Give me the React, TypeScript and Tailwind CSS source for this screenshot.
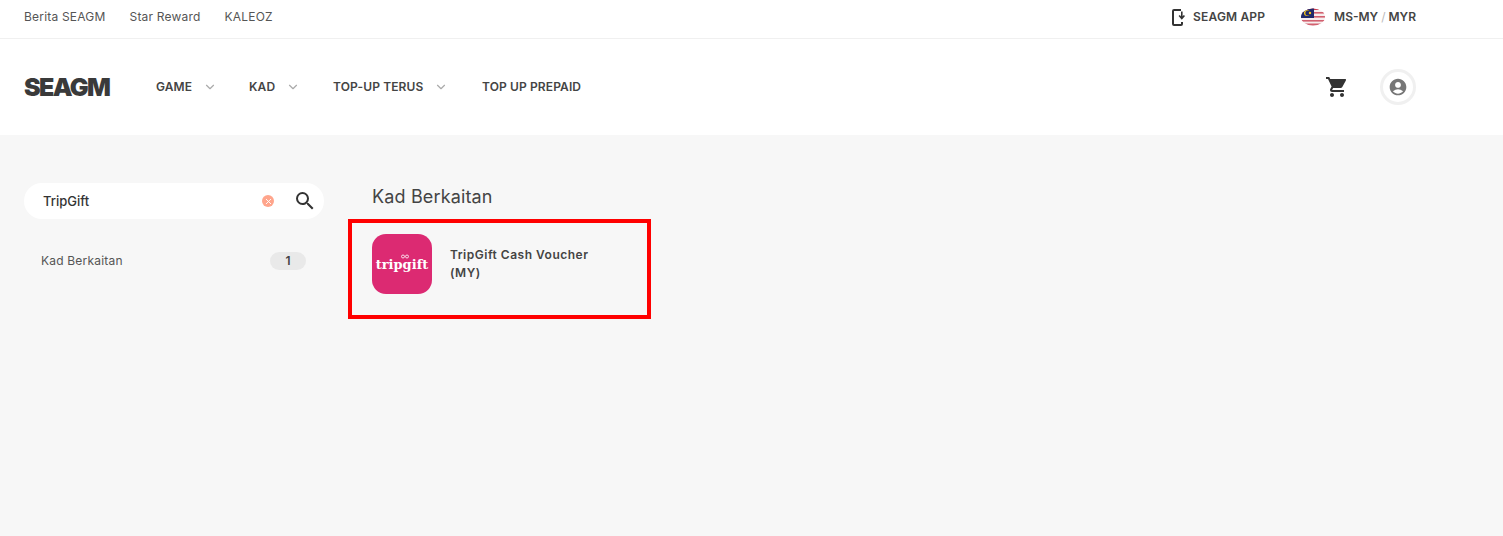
import React from "react";
import { ChevronDown, X } from "lucide-react";
import { MdAccountCircle, MdSearch, MdShoppingCart } from "react-icons/md";

const font = { fontFamily: "Inter, 'Noto Sans', sans-serif" };

const topLinks = ["Berita SEAGM", "Star Reward", "KALEOZ"];
const navItems = [
  { label: "GAME", width: "w-[93px]", arrow: true },
  { label: "KAD", width: "w-[84px]", arrow: true },
  { label: "TOP-UP TERUS", width: "w-[149px]", arrow: true },
  { label: "TOP UP PREPAID", width: "", arrow: false },
];

// Malaysia flag, clipped to an oval like the site does
const FlagIcon = () => (
  <svg width="24" height="18" viewBox="0 0 24 18" className="block">
    <defs>
      <clipPath id="flag">
        <ellipse cx="12" cy="9" rx="12" ry="8.6" />
      </clipPath>
    </defs>
    <g clipPath="url(#flag)">
      <rect width="24" height="18" fill="#f6eeee" />
      <rect y="0" width="24" height="2" fill="#c9384e" />
      <rect y="4" width="24" height="1.6" fill="#d2606f" />
      <rect y="8" width="24" height="1.6" fill="#d2606f" />
      <rect y="12" width="24" height="1.6" fill="#d2606f" />
      <rect y="15.5" width="24" height="2.5" fill="#d2606f" />
      <rect width="13" height="10" fill="#1f2a6b" />
      <circle cx="6" cy="5" r="3" fill="#f5c518" />
      <circle cx="7" cy="5" r="2.6" fill="#1f2a6b" />
      <circle cx="9" cy="5" r="1.2" fill="#f5c518" />
    </g>
  </svg>
);

const AppIcon = () => (
  <svg width="14" height="17" viewBox="0 0 14 17" fill="none" className="block">
    <path d="M9 1H2C1.4 1 1 1.4 1 2v13c0 .6.4 1 1 1h7c.6 0 1-.4 1-1v-2" stroke="#333" strokeWidth="2" />
    <path d="M9.8 2.5v6.5M7.2 6.5l2.6 3 2.6-3" stroke="#333" strokeWidth="1.6" />
  </svg>
);

export default function App() {
  return (
    <div className="min-h-[536px] bg-[#f7f7f7] text-[#444]" style={font}>
      <header className="bg-white">
        <div className="h-[39px] border-b border-[#f0f0f0] flex items-center justify-between pl-6 pr-[87px] pb-1">
          <div className="flex items-center gap-6 text-[12px] tracking-[0.2px] text-[#555]">
            {topLinks.map((link) => (
              <span key={link}>{link}</span>
            ))}
          </div>
          <div className="flex items-center text-[12px] font-semibold text-[#444]">
            <AppIcon />
            <span className="ml-[7px] tracking-[0.15px]">SEAGM APP</span>
            <span className="ml-9">
              <FlagIcon />
            </span>
            <span className="ml-[9px]">
              MS-MY <span className="text-[#bbb] font-normal">/</span> MYR
            </span>
          </div>
        </div>

        <div className="h-[96px] flex items-center justify-between pl-6 pr-[87px]">
          <div className="flex items-center">
            <span className="w-[132px] text-[25px] leading-none font-black tracking-[-1.6px] text-[#3a3a3a]">
              SEAGM
            </span>
            {navItems.map((item) => (
              <div key={item.label} className={`flex items-center ${item.width}`}>
                <span className="text-[12px] font-semibold tracking-[0.12px] text-[#444]">{item.label}</span>
                {item.arrow && <ChevronDown size={14} className="ml-[11px] text-[#aaa]" />}
              </div>
            ))}
          </div>
          <div className="flex items-center gap-[31px]">
            <MdShoppingCart size={24} className="text-[#333]" />
            <div className="w-9 h-9 rounded-full border-[3px] border-[#f0f0f0] flex items-center justify-center">
              <MdAccountCircle size={20} className="text-[#777]" />
            </div>
          </div>
        </div>
      </header>

      <main className="flex pl-6 pt-12">
        <aside className="w-[300px] shrink-0">
          <div className="h-9 rounded-full bg-white flex items-center pl-[19px] pr-[7px]">
            <span className="flex-1 pt-0.5 text-[13px] font-medium text-[#333]">TripGift</span>
            <span className="w-3 h-3 rounded-full bg-[#ffa58c] flex items-center justify-center mr-[19px]">
              <X size={9} strokeWidth={2.5} className="text-white" />
            </span>
            <MdSearch size={24} className="text-[#333]" />
          </div>
          <div className="mt-[33px] flex items-center justify-between pl-[17px] pr-[18px]">
            <span className="text-[12px] tracking-[0.2px] text-[#555]">Kad Berkaitan</span>
            <span className="w-9 h-[18px] rounded-full bg-[#e9e9e9] flex items-center justify-center text-[12px] font-semibold text-[#444]">
              1
            </span>
          </div>
        </aside>

        <section className="ml-6">
          <h2 className="h-9 pl-6 text-[18px] leading-[27px] font-normal tracking-[0.15px] text-[#444]">Kad Berkaitan</h2>
          <div className="w-[303px] h-[100px] border-4 border-[#f00] flex items-start pl-5 pt-[11px]">
            <div className="relative w-[60px] h-[60px] rounded-[14px] bg-[#dc2a72] flex items-center justify-center">
              <span className="pt-0.5 text-white text-[13px] font-bold" style={{ fontFamily: "'DejaVu Serif', serif" }}>
                tripgift
              </span>
              {/* little bow over the g */}
              <svg width="8" height="5" viewBox="0 0 8 5" fill="none" className="absolute left-[29px] top-[20px]">
                <circle cx="2" cy="2.5" r="1.5" stroke="#fff" strokeWidth="0.8" />
                <circle cx="6" cy="2.5" r="1.5" stroke="#fff" strokeWidth="0.8" />
              </svg>
            </div>
            <div className="ml-[18px] mt-3 w-[150px] text-[12px] leading-[18px] font-semibold tracking-[0.5px] text-[#444]">
              TripGift Cash Voucher (MY)
            </div>
          </div>
        </section>
      </main>
    </div>
  );
}
